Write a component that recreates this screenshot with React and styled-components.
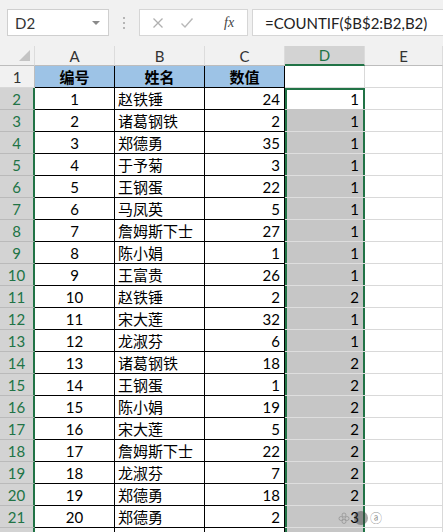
import React from "react";
import styled, { createGlobalStyle, css } from "styled-components";

const GlobalStyle = createGlobalStyle`
  html, body { margin: 0; padding: 0; }
  body {
    width: 443px;
    height: 532px;
    overflow: hidden;
    background: #ffffff;
    font-family: "Lato", "Noto Sans CJK SC", sans-serif;
  }
`;

const GREEN = "#217346";

const data = [
  [1, "赵铁锤", 24, 1],
  [2, "诸葛钢铁", 2, 1],
  [3, "郑德勇", 35, 1],
  [4, "于予菊", 3, 1],
  [5, "王钢蛋", 22, 1],
  [6, "马凤英", 5, 1],
  [7, "詹姆斯下士", 27, 1],
  [8, "陈小娟", 1, 1],
  [9, "王富贵", 26, 1],
  [10, "赵铁锤", 2, 2],
  [11, "宋大莲", 32, 1],
  [12, "龙淑芬", 6, 1],
  [13, "诸葛钢铁", 18, 2],
  [14, "王钢蛋", 1, 2],
  [15, "陈小娟", 19, 2],
  [16, "宋大莲", 5, 2],
  [17, "詹姆斯下士", 22, 2],
  [18, "龙淑芬", 7, 2],
  [19, "郑德勇", 18, 2],
  [20, "郑德勇", 2, 3],
];

const Page = styled.div`
  width: 443px;
  height: 532px;
  overflow: hidden;
  position: relative;
`;

const Toolbar = styled.div`
  height: 46px;
  background: #f1f1f1;
  display: flex;
  align-items: flex-start;
  padding: 9px 0 0 7px;
  box-sizing: border-box;
`;

const NameBox = styled.div`
  width: 102px;
  height: 27px;
  box-sizing: border-box;
  background: #fff;
  border: 1px solid #cfcfcf;
  display: flex;
  align-items: center;
  justify-content: space-between;
  padding: 0 8px 0 7px;
  font-size: 15px;
  color: #333;
`;

const Caret = styled.span`
  width: 0;
  height: 0;
  border-left: 4px solid transparent;
  border-right: 4px solid transparent;
  border-top: 4px solid #8a8a8a;
`;

const Dots = styled.div`
  width: 30px;
  height: 27px;
  display: flex;
  flex-direction: column;
  align-items: center;
  justify-content: center;
  gap: 3px;
  span {
    width: 2px;
    height: 2px;
    background: #b5b5b5;
  }
`;

const FxButtons = styled.div`
  width: 109px;
  height: 27px;
  box-sizing: border-box;
  background: #fff;
  border: 1px solid #d6d6d6;
  display: flex;
  align-items: center;
  padding: 0 0 0 12px;
  gap: 16px;
`;

const FxLabel = styled.span`
  font-family: "Liberation Serif", serif;
  font-style: italic;
  font-size: 14px;
  color: #444;
  margin-left: 14px;
`;

const FormulaInput = styled.div`
  flex: 1;
  height: 27px;
  margin-left: 4px;
  box-sizing: border-box;
  background: #fff;
  border: 1px solid #d6d6d6;
  border-right: none;
  display: flex;
  align-items: center;
  padding-left: 12px;
  font-size: 15px;
  color: #222;
  white-space: nowrap;
`;

const Sheet = styled.div`
  display: grid;
  grid-template-columns: 35px 80px 90px 80px 80px 1fr;
  grid-template-rows: 20px;
  grid-auto-rows: 22px;
  font-size: 15px;
`;

const ColHead = styled.div`
  box-sizing: border-box;
  display: flex;
  align-items: center;
  justify-content: center;
  background: ${(p) => (p.$active ? "#d3d3d3" : "#f1f1f1")};
  color: ${(p) => (p.$active ? GREEN : "#333")};
  border-right: 1px solid #dcdcdc;
  border-bottom: ${(p) => (p.$active ? `2px solid ${GREEN}` : "1px solid #bdbdbd")};
  position: relative;
`;

const Corner = styled.div`
  width: 0;
  height: 0;
  position: absolute;
  right: 4px;
  bottom: 4px;
  border-left: 11px solid transparent;
  border-bottom: 11px solid #c4c4c4;
`;

const RowHead = styled.div`
  box-sizing: border-box;
  display: flex;
  align-items: center;
  justify-content: center;
  background: ${(p) => (p.$active ? "#d3d3d3" : "#f1f1f1")};
  color: ${(p) => (p.$active ? GREEN : "#333")};
  border-bottom: 1px solid ${(p) => (p.$active ? "#bababa" : "#d8d8d8")};
  border-right: ${(p) => (p.$active ? `2px solid ${GREEN}` : "1px solid #bdbdbd")};
`;

const Cell = styled.div`
  box-sizing: border-box;
  display: flex;
  align-items: center;
  white-space: nowrap;
  overflow: visible;
  color: #000;
  border-right: 1px solid #d9d9d9;
  border-bottom: 1px solid #d9d9d9;
  justify-content: ${(p) =>
    p.$align === "center" ? "center" : p.$align === "right" ? "flex-end" : "flex-start"};
  padding: ${(p) => (p.$align === "left" ? "0 0 0 3px" : p.$align === "right" ? "0 4px 0 0" : "0")};
  ${(p) =>
    p.$boxed &&
    css`
      border-right: 1px solid #000;
      border-bottom: 1px solid #000;
    `}
  ${(p) =>
    p.$header &&
    css`
      background: #9dc3e6;
      font-weight: 700;
    `}
  ${(p) =>
    p.$selected &&
    css`
      background: ${p.$current ? "#fff" : "#c6c6c6"};
      border-bottom: 1px solid ${p.$current ? "#c6c6c6" : "#dedede"};
      border-right: none;
      padding-right: 6px;
      box-shadow: inset 2px 0 0 ${GREEN}, inset -2px 0 0 ${GREEN}
        ${p.$current ? `, inset 0 2px 0 ${GREEN}` : ""};
    `}
`;

const Watermark = styled.div`
  position: absolute;
  left: 338px;
  top: 509px;
  display: flex;
  align-items: center;
  gap: 3px;
  pointer-events: none;
`;

const Blob = styled.span`
  width: 14px;
  height: 14px;
  border-radius: 50%;
  background: rgba(60, 60, 60, 0.45);
  margin-left: 1px;
`;

const Faded = styled.span`
  font-size: 12px;
  color: rgba(120, 120, 120, 0.8);
  margin-left: -1px;
`;

function XIcon() {
  return (
    <svg width="12" height="12" viewBox="0 0 12 12">
      <path d="M1.5 1.5 L10.5 10.5 M10.5 1.5 L1.5 10.5" stroke="#b0b0b0" strokeWidth="1.3" />
    </svg>
  );
}

function CheckIcon() {
  return (
    <svg width="14" height="12" viewBox="0 0 14 12">
      <path d="M1.5 6.5 L5 10 L12.5 1.5" stroke="#b8b8b8" strokeWidth="1.4" fill="none" />
    </svg>
  );
}

function Flower() {
  return (
    <svg width="12" height="12" viewBox="0 0 12 12">
      <g fill="none" stroke="rgba(150,150,150,0.8)" strokeWidth="1">
        <circle cx="6" cy="3" r="2" />
        <circle cx="3" cy="6.5" r="2" />
        <circle cx="9" cy="6.5" r="2" />
        <circle cx="6" cy="9.5" r="2" />
      </g>
    </svg>
  );
}

export default function App() {
  const cols = ["A", "B", "C", "D", "E"];
  const rows = [];

  rows.push(
    <RowHead key="r1">1</RowHead>,
    <Cell key="a1" $align="center" $boxed $header>编号</Cell>,
    <Cell key="b1" $align="center" $boxed $header>姓名</Cell>,
    <Cell key="c1" $align="center" $boxed $header>数值</Cell>,
    <Cell key="d1" />,
    <Cell key="e1" />
  );

  data.forEach(([id, name, val, cnt], i) => {
    const r = i + 2;
    rows.push(
      <RowHead key={`r${r}`} $active>{r}</RowHead>,
      <Cell key={`a${r}`} $align="center" $boxed>{id}</Cell>,
      <Cell key={`b${r}`} $align="left" $boxed>{name}</Cell>,
      <Cell key={`c${r}`} $align="right" $boxed>{val}</Cell>,
      <Cell key={`d${r}`} $align="right" $selected $current={r === 2}>{cnt}</Cell>,
      <Cell key={`e${r}`} />
    );
  });

  rows.push(
    <RowHead key="r22" $active />,
    <Cell key="a22" $boxed />,
    <Cell key="b22" $boxed />,
    <Cell key="c22" $boxed />,
    <Cell key="d22" $selected />,
    <Cell key="e22" />
  );

  return (
    <Page>
      <GlobalStyle />
      <Toolbar>
        <NameBox>
          D2
          <Caret />
        </NameBox>
        <Dots>
          <span />
          <span />
          <span />
        </Dots>
        <FxButtons>
          <XIcon />
          <CheckIcon />
          <FxLabel>fx</FxLabel>
        </FxButtons>
        <FormulaInput>=COUNTIF($B$2:B2,B2)</FormulaInput>
      </Toolbar>
      <Sheet>
        <ColHead>
          <Corner />
        </ColHead>
        {cols.map((c) => (
          <ColHead key={c} $active={c === "D"}>
            {c}
          </ColHead>
        ))}
        {rows}
      </Sheet>
      <Watermark>
        <Flower />
        <Blob />
        <Faded>ⓐ</Faded>
      </Watermark>
    </Page>
  );
}
